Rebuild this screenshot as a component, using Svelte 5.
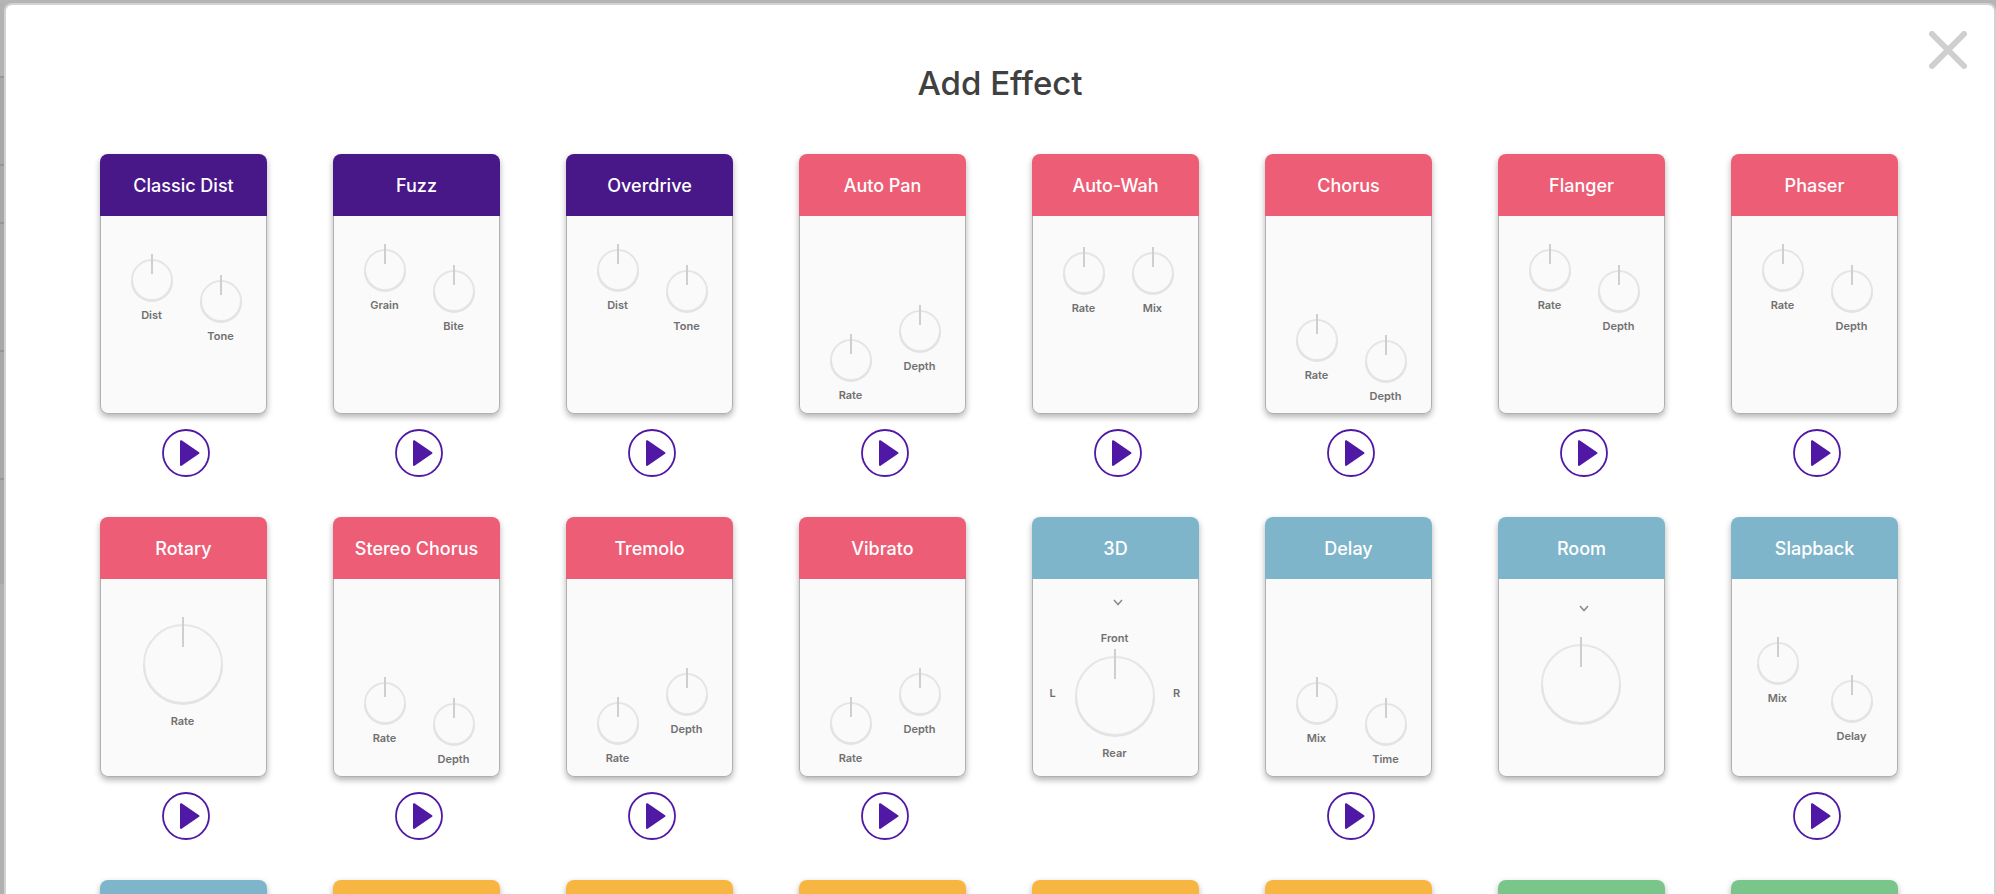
<script>
  const PURPLE = 'purple';
  const RED = 'red';
  const BLUE = 'blue';
  const YELLOW = 'yellow';
  const GREEN = 'green';

  const effects = [
    { name: 'Classic Dist', color: PURPLE, layout: 'mid-down', knobs: ['Dist', 'Tone'], preview: true },
    { name: 'Fuzz', color: PURPLE, layout: 'high-down', knobs: ['Grain', 'Bite'], preview: true },
    { name: 'Overdrive', color: PURPLE, layout: 'high-down', knobs: ['Dist', 'Tone'], preview: true },
    { name: 'Auto Pan', color: RED, layout: 'low-up', knobs: ['Rate', 'Depth'], preview: true },
    { name: 'Auto-Wah', color: RED, layout: 'level', knobs: ['Rate', 'Mix'], preview: true },
    { name: 'Chorus', color: RED, layout: 'low-down', knobs: ['Rate', 'Depth'], preview: true },
    { name: 'Flanger', color: RED, layout: 'high-down', knobs: ['Rate', 'Depth'], preview: true },
    { name: 'Phaser', color: RED, layout: 'high-down', knobs: ['Rate', 'Depth'], preview: true },
    { name: 'Rotary', color: RED, layout: 'single', knobs: ['Rate'], preview: true },
    { name: 'Stereo Chorus', color: RED, layout: 'low-down', knobs: ['Rate', 'Depth'], preview: true },
    { name: 'Tremolo', color: RED, layout: 'low-up', knobs: ['Rate', 'Depth'], preview: true },
    { name: 'Vibrato', color: RED, layout: 'low-up', knobs: ['Rate', 'Depth'], preview: true },
    { name: '3D', color: BLUE, layout: 'surround', knobs: [] },
    { name: 'Delay', color: BLUE, layout: 'low-down', knobs: ['Mix', 'Time'], preview: true },
    { name: 'Room', color: BLUE, layout: 'room', knobs: [] },
    { name: 'Slapback', color: BLUE, layout: 'wide-down', knobs: ['Mix', 'Delay'], preview: true },
    { color: BLUE },
    { color: YELLOW },
    { color: YELLOW },
    { color: YELLOW },
    { color: YELLOW },
    { color: YELLOW },
    { color: GREEN },
    { color: GREEN }
  ];
</script>

{#snippet dial(large)}
  {#if large}
    <svg class="dial" width="80" height="88" viewBox="0 0 80 88" aria-hidden="true">
      <circle cx="40" cy="47" r="39" fill="none" stroke="#e6e6e6" stroke-width="2" />
      <path d="M1 48a39 39 0 0 0 78 0" fill="none" stroke="#e3e3e3" stroke-width="2" />
      <path d="M40 0v30" stroke="#cfcfcf" stroke-width="2" />
    </svg>
  {:else}
    <svg class="dial" width="42" height="48" viewBox="0 0 42 48" aria-hidden="true">
      <circle cx="21" cy="26" r="20" fill="none" stroke="#e5e5e5" stroke-width="2" />
      <path d="M1 27a20 20 0 0 0 40 0" fill="none" stroke="#e3e3e3" stroke-width="2" />
      <path d="M21 0v20" stroke="#cfcfcf" stroke-width="2" />
    </svg>
  {/if}
{/snippet}

{#snippet chevron()}
  <svg class="chevron" width="10" height="7" viewBox="0 0 10 7" aria-hidden="true">
    <path d="M1 1l4 4.500 4-4.500" fill="none" stroke="#8a8a8a" stroke-width="1.500" />
  </svg>
{/snippet}

<div class="page">
  <div class="tracks">
    <span></span>
    <span></span>
    <span></span>
    <span></span>
    <span></span>
    <span></span>
  </div>

  <main class="modal">
    <button class="close" aria-label="Close">
      <svg width="38" height="38" viewBox="0 0 38 38" aria-hidden="true">
        <path d="M3 3l32 32M35 3L3 35" stroke="#cfcfd1" stroke-width="6" stroke-linecap="round" />
      </svg>
    </button>

    <h1>Add Effect</h1>

    <div class="grid">
      {#each effects as effect}
        <div class="effect">
          <button class="card">
            <span class="name {effect.color}">{effect.name ?? ''}</span>
            <span class="body {effect.layout ?? ''}">
              {#if effect.layout === 'surround'}
                {@render chevron()}
                <span class="label">Front</span>
                <span class="sides">
                  <span class="label">L</span>
                  {@render dial(true)}
                  <span class="label">R</span>
                </span>
                <span class="label">Rear</span>
              {:else if effect.layout === 'room'}
                {@render chevron()}
                {@render dial(true)}
              {:else if effect.layout}
                {#each effect.knobs as knob}
                  <span class="knob">
                    {@render dial(effect.layout === 'single')}
                    <span class="label">{knob}</span>
                  </span>
                {/each}
              {/if}
            </span>
          </button>

          {#if effect.preview}
            <button class="play" aria-label="Play">
              <svg width="48" height="48" viewBox="0 0 48 48" aria-hidden="true">
                <circle cx="24" cy="24" r="23" fill="none" stroke="#5019a5" stroke-width="1.800" />
                <path
                  d="M19 12.200l17.500 11.800-17.500 12z"
                  fill="#5019a5"
                  stroke="#5019a5"
                  stroke-width="2"
                  stroke-linejoin="round"
                />
              </svg>
            </button>
          {/if}
        </div>
      {/each}
    </div>
  </main>
</div>

<style>
  :global(body) {
    margin: 0;
    overflow: hidden;
  }

  .page {
    box-sizing: border-box;
    display: flex;
    height: 100vh;
    padding-top: 3px;
    overflow: hidden;
    background: #b5b5b5;
    font-family: Inter, 'Liberation Sans', sans-serif;
  }

  /* sliver of the editor behind the dialog */
  .tracks {
    display: grid;
    grid-template-rows: 75px 88px 58px 128px 128px 104px;
    align-content: start;
    flex: none;
    width: 4px;
    background: #b0b0b0;
  }

  .tracks span {
    box-sizing: border-box;
    border-bottom: 2px solid #969696;
    background: #a8a8a8;
  }

  .tracks span:first-child {
    background: #b2b2b2;
  }

  .tracks span:last-child {
    border-bottom: none;
  }

  .modal {
    position: relative;
    box-sizing: border-box;
    flex: 1;
    min-width: 0;
    overflow: hidden;
    border: 2px solid #d2d2d2;
    border-bottom: none;
    border-radius: 8px 8px 0 0;
    background: #fff;
  }

  button {
    margin: 0;
    padding: 0;
    border: none;
    background: none;
    font: inherit;
    cursor: pointer;
  }

  svg {
    display: block;
    flex: none;
  }

  .close {
    position: absolute;
    top: 26px;
    right: 27px;
  }

  h1 {
    margin: 56px 0 49px;
    color: #404040;
    font-size: 33px;
    font-weight: 500;
    line-height: 44px;
    text-align: center;
  }

  .grid {
    display: grid;
    grid-template-columns: repeat(8, 1fr);
    row-gap: 40px;
    padding: 0 63px 0 61px;
  }

  .effect {
    display: flex;
    flex-direction: column;
    align-items: center;
    gap: 15px;
  }

  .card {
    display: flex;
    flex-direction: column;
    box-sizing: border-box;
    width: 167px;
    height: 260px;
    border-radius: 8px;
    background: #fafafa;
    box-shadow: 0 3px 6px rgba(0, 0, 0, 0.3);
  }

  .name {
    align-self: stretch;
    flex: none;
    height: 62px;
    border-radius: 8px 8px 0 0;
    color: #fff;
    font-size: 18px;
    font-weight: 500;
    line-height: 64px;
    text-align: center;
    white-space: nowrap;
  }

  .purple {
    background: #481889;
  }

  .red {
    background: #ed5d75;
  }

  .blue {
    background: #7fb5cb;
  }

  .yellow {
    background: #f7b541;
  }

  .green {
    background: #7ac68a;
  }

  .body {
    display: flex;
    flex: 1;
    align-self: stretch;
    align-items: flex-start;
    justify-content: center;
    gap: 27px;
    box-sizing: border-box;
    padding-left: 5px;
    border: 1px solid #b0b0b0;
    border-top: none;
    border-radius: 0 0 8px 8px;
  }

  .knob {
    display: flex;
    flex-direction: column;
    align-items: center;
    width: 42px;
    margin-top: var(--first);
  }

  .knob + .knob {
    margin-top: var(--second);
  }

  .label {
    color: #707070;
    font-size: 11px;
    font-weight: 600;
    line-height: 14px;
  }

  .knob .label {
    margin-top: 6px;
  }

  .mid-down {
    --first: 38px;
    --second: 59px;
  }

  .high-down {
    --first: 28px;
    --second: 49px;
  }

  .low-down {
    --first: 98px;
    --second: 119px;
  }

  .low-up {
    --first: 118px;
    --second: 89px;
  }

  .level {
    --first: 31px;
    --second: 31px;
  }

  .wide-down {
    --first: 58px;
    --second: 96px;
    gap: 32px;
    padding-left: 0;
  }

  .single {
    --first: 38px;
  }

  .single .label {
    margin-top: 9px;
  }

  .surround,
  .room {
    flex-direction: column;
    align-items: center;
    justify-content: flex-start;
    gap: 0;
  }

  .single,
  .surround,
  .room {
    padding-left: 0;
    padding-right: 2px;
  }

  .surround {
    padding-top: 20px;
  }

  .surround > .label {
    margin-top: 25px;
  }

  .surround .sides {
    display: flex;
    align-items: center;
    gap: 18px;
    margin-top: 4px;
  }

  .sides .label {
    width: 8px;
    text-align: center;
  }

  .surround .sides + .label {
    margin-top: 9px;
  }

  .room {
    padding-top: 26px;
  }

  .room .dial {
    margin-top: 25px;
  }

  .chevron {
    margin-left: 6px;
  }

  .play {
    margin-left: 4px;
  }
</style>
